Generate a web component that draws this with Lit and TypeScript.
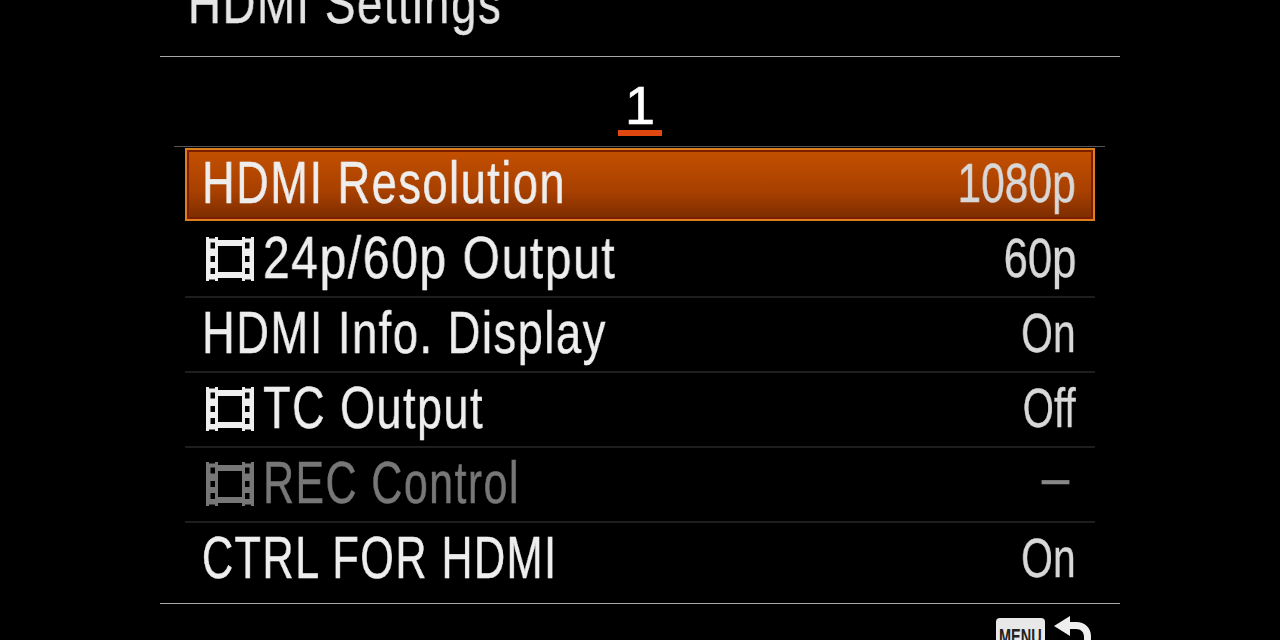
import { LitElement, html, css, svg } from "lit";
import { customElement } from "lit/decorators.js";

const film = svg`<svg class="film" viewBox="0 0 48 46" width="48" height="46" fill="currentColor" aria-hidden="true">
<path fill-rule="evenodd" d="M0 1h3v1.500h6V1h3v3h24V1h3v1.500h6V1h3v44h-3v-1.500h-6V45h-3v-3H12v3H9v-1.500H3V45H0zM12 10v26h24V10zM4.500 6.500v6h4.500v-6zM4.500 20v6h4.500v-6zM4.500 32v6h4.500v-6zM39 6.500v6h4.500v-6zM39 20v6h4.500v-6zM39 32v6h4.500v-6z"/></svg>`;

const rows = [
  { label: "HDMI Resolution", value: "1080p", film: false, cls: "sel", sx: 0.753, vx: 0.76 },
  { label: "24p/60p Output", value: "60p", film: true, cls: "", sx: 0.8, vx: 0.78 },
  { label: "HDMI Info. Display", value: "On", film: false, cls: "", sx: 0.755, vx: 0.73 },
  { label: "TC Output", value: "Off", film: true, cls: "", sx: 0.75, vx: 0.72 },
  { label: "REC Control", value: "–", film: true, cls: "dim", sx: 0.716, vx: 0.88 },
  { label: "CTRL FOR HDMI", value: "On", film: false, cls: "last", sx: 0.72, vx: 0.73 },
];

@customElement("app-root")
export class AppRoot extends LitElement {
  static styles = css`
    :host { display: block; width: 1280px; height: 640px; background: #000; overflow: hidden; font-family: "Liberation Sans", Arial, sans-serif; color: #f0f0f0; }
    .screen { width: 960px; margin: 0 auto; display: flex; flex-direction: column; height: 640px; }
    .screen > * { flex: none; }
    .title { height: 56px; box-sizing: content-box; border-bottom: 1px solid #a8a8a8; padding-left: 28px; display: flex; align-items: flex-end; }
    .t { display: inline-block; font-size: 58px; line-height: 58px; letter-spacing: 2px; transform: scaleX(.786); transform-origin: left; white-space: nowrap; margin-bottom: 24px; color: #e4e4e4; will-change: transform; -webkit-text-stroke: .4px #e4e4e4; }
    .tabs { height: 89px; box-sizing: border-box; display: flex; flex-direction: column; align-items: center; }
    .num { font-size: 54px; line-height: 52px; height: 50px; margin-top: 22px; margin-bottom: 1px; color: #fff; -webkit-text-stroke: .6px #fff; }
    .bar { width: 44px; height: 6px; background: #e0480f; }
    .list { margin: 0 15px 0 14px; border-top: 1px solid #555; padding: 1px 10px 0 11px; height: 457px; box-sizing: border-box; }
    .row { height: 75px; box-sizing: border-box; display: flex; align-items: center; justify-content: space-between; padding: 0 19px 4px 17px; border-bottom: 2px solid #1e1e1e; white-space: nowrap; }
    .row.last { border-bottom: 0; height: 80px; padding-bottom: 11px; }
    .row.sel { height: 73px; border: 2px solid #dd7f1e; background: linear-gradient(#c45000, #a84000 60%, #7a2c00); box-shadow: inset 0 0 0 2px #7c1e00; padding: 0 17px 3px 15px; margin-bottom: 2px; }
    .left { display: flex; align-items: center; gap: 9px; color: #eeeeee; }
    .film { flex: none; margin-left: 4px; margin-top: 3px; }
    .label { display: inline-block; font-size: 60px; line-height: 60px; letter-spacing: 2px; transform-origin: left; will-change: transform; -webkit-text-stroke: .5px currentColor; }
    .val { display: inline-block; font-size: 56px; line-height: 60px; transform-origin: right; color: #d8d8d8; will-change: transform; -webkit-text-stroke: .4px currentColor; }
    .dim .left { color: #777; }
    .dim .val { color: #888; padding: 0 8px 12px 0; }
    .footer { flex: 1 !important; min-height: 0; border-top: 1px solid #a8a8a8; display: flex; justify-content: flex-end; align-items: flex-start; gap: 9px; padding: 14px 28px 0 0; box-sizing: border-box; overflow: hidden; }
    .menu { background: #e8e8e8; color: #222; border-radius: 4px; width: 49px; height: 40px; box-sizing: border-box; font-size: 22px; font-weight: 700; line-height: 34px; text-align: center; overflow: hidden; flex: none; }
    .menu span { display: inline-block; transform: scaleX(.66); transform-origin: center; margin: 0 -10px; padding-top: 2px; }
    .back { flex: none; margin-top: -2px; }
  `;

  render() {
    return html`<div class="screen">
      <div class="title"><span class="t">HDMI Settings</span></div>
      <div class="tabs"><div class="num">1</div><div class="bar"></div></div>
      <div class="list">
        ${rows.map(r => html`<div class="row ${r.cls}">
          <div class="left">${r.film ? film : ""}<span class="label" style="transform:scaleX(${r.sx})">${r.label}</span></div>
          <span class="val" style="transform:scaleX(${r.vx})">${r.value}</span>
        </div>`)}
      </div>
      <div class="footer">
        <div class="menu"><span>MENU</span></div>
        <svg class="back" width="38" height="30" viewBox="0 0 38 30"><path d="M0 10 16 0v6h6c9 0 15 6 15 14v10h-7V21c0-5-3-8-8-8h-6v7z" fill="#eee"/></svg>
      </div>
    </div>`;
  }
}
